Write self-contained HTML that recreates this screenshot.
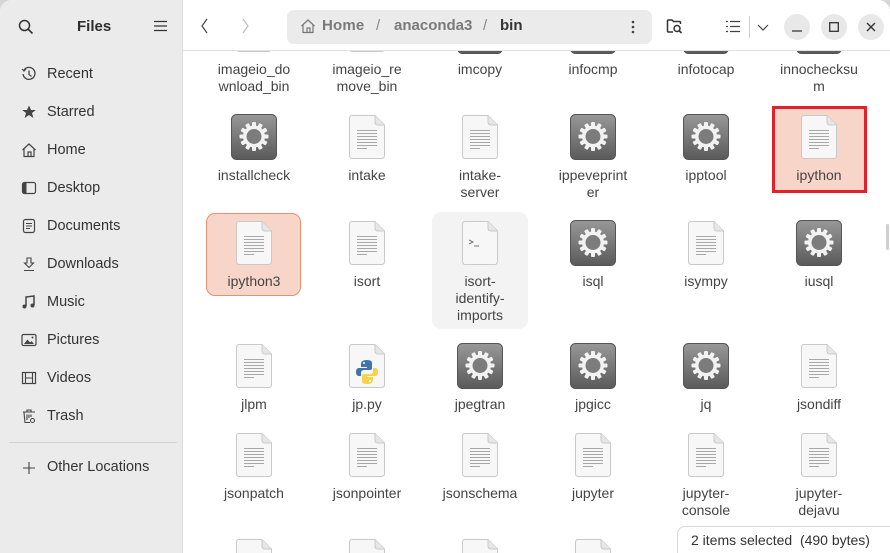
<!DOCTYPE html>
<html><head><meta charset="utf-8">
<style>
*{box-sizing:border-box;margin:0;padding:0}
body{width:890px;height:553px;overflow:hidden;background:#d6d6d6;font-family:"Liberation Sans",sans-serif;font-size:14px;color:#3d3d3d;position:relative}
#win{position:absolute;left:0;top:0;width:890px;height:553px;border-radius:12px 12px 0 0;overflow:hidden;background:#fff}
#side{position:absolute;left:0;top:0;width:183px;height:553px;background:#ebebeb;border-right:1px solid #dcdcdc}
.si{position:absolute;left:47px;font-size:14.5px;color:#333}
.ic{position:absolute;left:21px}
#main{position:absolute;left:183px;top:0;width:707px;height:553px;background:#fff;overflow:hidden}
#hdr{position:absolute;left:183px;top:0;width:707px;height:51px;background:#fff;border-bottom:1px solid #e2e2e2;z-index:5}
.it{position:absolute;width:96px;text-align:center}
.it svg{display:block;margin:0 auto}
.lb{font-size:14px;line-height:17px;color:#444;margin-top:8px}
.wb{position:absolute;top:14px;width:26px;height:26px;border-radius:13px;background:#e8e8e8}
</style></head><body>
<svg width="0" height="0" style="position:absolute">
<defs>
<linearGradient id="gg" x1="0" y1="0" x2="0" y2="1"><stop offset="0" stop-color="#989898"/><stop offset="1" stop-color="#5a5a5a"/></linearGradient>
<symbol id="file" viewBox="0 0 38 46">
<path d="M4 1.5H27L36.5 11V41.5Q36.5 44.5 33.5 44.5H4.5Q1.5 44.5 1.5 41.5V4.5Q1.5 1.5 4 1.5Z" fill="#f7f7f7" stroke="#c9c9c9"/>
<path d="M27 1.5V8Q27 11 30 11H36.5" fill="#e6e6e6" stroke="#c9c9c9"/>
<g stroke="#a8a8a8" stroke-width="1"><path d="M9 16.5H29M9 19.5H29M9 22.5H29M9 25.5H29M9 28.5H29M9 31.5H29M9 34.5H19"/></g>
</symbol>
<symbol id="term" viewBox="0 0 38 46">
<path d="M4 1.5H27L36.5 11V41.5Q36.5 44.5 33.5 44.5H4.5Q1.5 44.5 1.5 41.5V4.5Q1.5 1.5 4 1.5Z" fill="#f7f7f7" stroke="#c9c9c9"/>
<path d="M27 1.5V8Q27 11 30 11H36.5" fill="#e6e6e6" stroke="#c9c9c9"/>
<path d="M8 20L12 22L8 24M13 26H18" stroke="#777" fill="none" stroke-width="1"/>
</symbol>
<symbol id="py" viewBox="0 0 38 46">
<path d="M4 1.5H27L36.5 11V41.5Q36.5 44.5 33.5 44.5H4.5Q1.5 44.5 1.5 41.5V4.5Q1.5 1.5 4 1.5Z" fill="#f7f7f7" stroke="#c9c9c9"/>
<path d="M27 1.5V8Q27 11 30 11H36.5" fill="#e6e6e6" stroke="#c9c9c9"/>
<path d="M19 17Q13 17 13 21V24H19V25H11Q8 25 8 29Q8 33 11 33H13V30Q13 27 16 27H22Q24 27 24 25V20Q24 17 19 17Z" fill="#3d74ad"/>
<path d="M19 41Q25 41 25 37V34H19V33H27Q30 33 30 29Q30 25 27 25H25V28Q25 31 22 31H16Q14 31 14 33V38Q14 41 19 41Z" fill="#f5d24b"/>
<circle cx="16" cy="20" r="1" fill="#fff"/><circle cx="22" cy="38" r="1" fill="#fff"/>
</symbol>
<symbol id="gear" viewBox="0 0 46 46">
<rect x="0.5" y="0.5" width="45" height="45" rx="5" fill="url(#gg)" stroke="#555"/>
<g transform="translate(23 22.5)" fill="#f2f2f2">
<circle r="11"/>
<g><rect x="-2" y="-14.5" width="4" height="29" rx="1"/><rect x="-2" y="-14.5" width="4" height="29" rx="1" transform="rotate(30)"/><rect x="-2" y="-14.5" width="4" height="29" rx="1" transform="rotate(60)"/><rect x="-2" y="-14.5" width="4" height="29" rx="1" transform="rotate(90)"/><rect x="-2" y="-14.5" width="4" height="29" rx="1" transform="rotate(120)"/><rect x="-2" y="-14.5" width="4" height="29" rx="1" transform="rotate(150)"/></g>
<circle r="7.5" fill="#7c7c7c"/>
</g>
</symbol>
</defs></svg>
<div id="win">
<div id="side">
<svg style="position:absolute;left:18px;top:19px" width="16" height="16" viewBox="0 0 16 16"><circle cx="6.5" cy="6.5" r="5" fill="none" stroke="#333" stroke-width="1.5"/><path d="M10 10L14.5 14.5" stroke="#333" stroke-width="1.6"/></svg>
<div style="position:absolute;left:77px;top:18px;font-weight:bold;font-size:15px;color:#2e2e2e">Files</div>
<svg style="position:absolute;left:154px;top:20px" width="13" height="12"><path d="M0 1.5H13M0 6H13M0 10.5H13" stroke="#333" stroke-width="1.2"/></svg>
<svg class="ic" style="top:66px" width="16" height="16" viewBox="0 0 16 16"><path d="M3 4A6 6 0 1 1 2 8" fill="none" stroke="#444" stroke-width="1.3"/><path d="M8 4.5V8.5L10.5 10.5" fill="none" stroke="#444" stroke-width="1.3"/><path d="M1 3L3 5L5 3" fill="none" stroke="#444" stroke-width="1.2"/></svg>
<div class="si" style="top:66px">Recent</div>
<svg class="ic" style="top:104px" width="16" height="16" viewBox="0 0 16 16"><path d="M8 1.5L10 6H14.8L11 9L12.4 14L8 11L3.6 14L5 9L1.2 6H6Z" fill="#444"/></svg>
<div class="si" style="top:104px">Starred</div>
<svg class="ic" style="top:142px" width="16" height="16" viewBox="0 0 16 16"><path d="M1.5 8L8 2L14.5 8M3 7V14.5H13V7M7 14.5V10H10V14.5" fill="none" stroke="#444" stroke-width="1.2"/></svg>
<div class="si" style="top:142px">Home</div>
<svg class="ic" style="top:180px" width="16" height="16" viewBox="0 0 16 16"><rect x="1.5" y="2.5" width="13" height="11" rx="2" fill="none" stroke="#444" stroke-width="1.2"/><rect x="2" y="3" width="3.5" height="10" fill="#444"/></svg>
<div class="si" style="top:180px">Desktop</div>
<svg class="ic" style="top:218px" width="16" height="16" viewBox="0 0 16 16"><rect x="2.5" y="1.5" width="11" height="13" rx="2" fill="none" stroke="#444" stroke-width="1.2"/><path d="M5 5.5H11M5 8H11M5 10.5H9" stroke="#444"/></svg>
<div class="si" style="top:218px">Documents</div>
<svg class="ic" style="top:256px" width="16" height="16" viewBox="0 0 16 16"><path d="M6 2H10V7H12.5L8 11.5L3.5 7H6Z M3 14.5H13" fill="none" stroke="#444" stroke-width="1.1"/></svg>
<div class="si" style="top:256px">Downloads</div>
<svg class="ic" style="top:294px" width="16" height="16" viewBox="0 0 16 16"><path d="M5 12V3L13 2V11" fill="none" stroke="#444" stroke-width="1.5"/><circle cx="3.5" cy="12.5" r="2" fill="#444"/><circle cx="11.5" cy="11.5" r="2" fill="#444"/></svg>
<div class="si" style="top:294px">Music</div>
<svg class="ic" style="top:332px" width="16" height="16" viewBox="0 0 16 16"><rect x="1" y="2.5" width="14" height="11" rx="1.5" fill="none" stroke="#444" stroke-width="1.2"/><path d="M3 12L6.5 7.5L9 10.5L10.5 9L13 12Z" fill="#444"/><circle cx="11.5" cy="5.5" r="1" fill="#444"/></svg>
<div class="si" style="top:332px">Pictures</div>
<svg class="ic" style="top:370px" width="16" height="16" viewBox="0 0 16 16"><rect x="1.5" y="2.5" width="13" height="11" fill="none" stroke="#444" stroke-width="1.2"/><path d="M4.5 2.5V13.5M11.5 2.5V13.5M4.5 8H11.5" stroke="#444" stroke-width="1.1"/></svg>
<div class="si" style="top:370px">Videos</div>
<svg class="ic" style="top:408px" width="16" height="16" viewBox="0 0 16 16"><path d="M2 4H14M6 4V2H10V4M3 4.5L4 14.5H9M6 6.5V12M8 6.5V10M10 6.5V9" fill="none" stroke="#444" stroke-width="1.1"/><circle cx="11.5" cy="12.5" r="2" fill="none" stroke="#444"/></svg>
<div class="si" style="top:408px">Trash</div>
<div style="position:absolute;left:9px;top:442px;width:168px;height:1px;background:#d2d2d2"></div>
<svg class="ic" style="top:460px" width="16" height="16" viewBox="0 0 16 16"><path d="M8 2V14M2 8H14" stroke="#444" stroke-width="1.1"/></svg>
<div class="si" style="top:459px">Other Locations</div>
</div>

<div id="hdr">
<svg style="position:absolute;left:17px;top:18px" width="10" height="16"><path d="M7 1L2 8L7 15" fill="none" stroke="#444" stroke-width="1.2"/></svg>
<svg style="position:absolute;left:57px;top:18px" width="10" height="16"><path d="M3 1L8 8L3 15" fill="none" stroke="#bbb" stroke-width="1.2"/></svg>
<div style="position:absolute;left:104px;top:10px;width:365px;height:34px;background:#ebebeb;border-radius:7px"></div>
<svg style="position:absolute;left:117px;top:18px" width="16" height="16" viewBox="0 0 16 16"><path d="M1.5 8L8 2L14.5 8M3 7V14.5H13V7M7 14.5V10H10V14.5" fill="none" stroke="#777" stroke-width="1.2"/></svg>
<div style="position:absolute;left:139px;top:17px;font-size:15px;color:#7a7a7a;font-weight:bold;letter-spacing:.2px">Home</div>
<div style="position:absolute;left:193px;top:17px;font-size:15px;color:#888">/</div>
<div style="position:absolute;left:211px;top:17px;font-size:15px;color:#7a7a7a;font-weight:bold">anaconda3</div>
<div style="position:absolute;left:300px;top:17px;font-size:15px;color:#888">/</div>
<div style="position:absolute;left:317px;top:17px;font-size:15px;color:#333;font-weight:bold">bin</div>
<svg style="position:absolute;left:448px;top:20px" width="4" height="14"><circle cx="2" cy="2" r="1.3" fill="#444"/><circle cx="2" cy="7" r="1.3" fill="#444"/><circle cx="2" cy="12" r="1.3" fill="#444"/></svg>
<svg style="position:absolute;left:483px;top:18px" width="18" height="16" viewBox="0 0 18 16"><path d="M7 14H2.5Q1.5 14 1.5 13V3Q1.5 2 2.5 2H6L7.5 3.5H13.5Q14.5 3.5 14.5 4.5V6" fill="none" stroke="#333" stroke-width="1.5"/><circle cx="11" cy="10.5" r="3" fill="none" stroke="#333" stroke-width="1.5"/><path d="M13 12.5L15.5 15" stroke="#333" stroke-width="1.6"/></svg>
<svg style="position:absolute;left:543px;top:20px" width="14" height="13"><path d="M0 1.5H2M0 6.5H2M0 11.5H2M4 1.5H14M4 6.5H14M4 11.5H14" stroke="#444" stroke-width="1.3"/></svg>
<div style="position:absolute;left:566px;top:16px;width:1px;height:22px;background:#ccc"></div>
<svg style="position:absolute;left:574px;top:24px" width="12" height="7"><path d="M1 1L6 6L11 1" fill="none" stroke="#444" stroke-width="1.2"/></svg>
<div class="wb" style="left:601px"></div><svg style="position:absolute;left:609px;top:30px" width="10" height="2"><path d="M0 1H10" stroke="#333" stroke-width="1.3"/></svg>
<div class="wb" style="left:638px"></div><svg style="position:absolute;left:646px;top:22px" width="10" height="10"><rect x=".7" y=".7" width="8.6" height="8.6" fill="none" stroke="#333" stroke-width="1.3"/></svg>
<div class="wb" style="left:675px"></div><svg style="position:absolute;left:683px;top:22px" width="10" height="10"><path d="M1 1L9 9M9 1L1 9" stroke="#333" stroke-width="1.4"/></svg>
</div>

<div id="main">
<div style="position:absolute;left:589px;top:106px;width:95px;height:87px;background:#f8d5c9;border:3px solid #e3212b"></div>
<div style="position:absolute;left:23px;top:213px;width:95px;height:83px;background:#f8d5c9;border:1.5px solid #e8906f;border-radius:9px"></div>
<div style="position:absolute;left:249px;top:212px;width:96px;height:117px;background:#f3f3f3;border-radius:9px"></div>

<div class="it" style="left:23px;top:7px"><svg width="38" height="46"><use href="#file"/></svg><div class="lb">imageio_do<br>wnload_bin</div></div>
<div class="it" style="left:136px;top:7px"><svg width="38" height="46"><use href="#file"/></svg><div class="lb">imageio_re<br>move_bin</div></div>
<div class="it" style="left:249px;top:8px"><svg width="46" height="46"><use href="#gear"/></svg><div class="lb" style="margin-top:7px">imcopy</div></div>
<div class="it" style="left:362px;top:8px"><svg width="46" height="46"><use href="#gear"/></svg><div class="lb" style="margin-top:7px">infocmp</div></div>
<div class="it" style="left:475px;top:8px"><svg width="46" height="46"><use href="#gear"/></svg><div class="lb" style="margin-top:7px">infotocap</div></div>
<div class="it" style="left:588px;top:8px"><svg width="46" height="46"><use href="#gear"/></svg><div class="lb" style="margin-top:7px">innochecksu<br>m</div></div>

<div class="it" style="left:23px;top:114px"><svg width="46" height="46"><use href="#gear"/></svg><div class="lb" style="margin-top:7px">installcheck</div></div>
<div class="it" style="left:136px;top:114px"><svg width="38" height="46"><use href="#file"/></svg><div class="lb" style="margin-top:7px">intake</div></div>
<div class="it" style="left:249px;top:114px"><svg width="38" height="46"><use href="#file"/></svg><div class="lb" style="margin-top:7px">intake-<br>server</div></div>
<div class="it" style="left:362px;top:114px"><svg width="46" height="46"><use href="#gear"/></svg><div class="lb" style="margin-top:7px">ippeveprint<br>er</div></div>
<div class="it" style="left:475px;top:114px"><svg width="46" height="46"><use href="#gear"/></svg><div class="lb" style="margin-top:7px">ipptool</div></div>
<div class="it" style="left:588px;top:114px"><svg width="38" height="46"><use href="#file"/></svg><div class="lb" style="margin-top:7px">ipython</div></div>

<div class="it" style="left:23px;top:220px"><svg width="38" height="46"><use href="#file"/></svg><div class="lb" style="margin-top:7px">ipython3</div></div>
<div class="it" style="left:136px;top:220px"><svg width="38" height="46"><use href="#file"/></svg><div class="lb" style="margin-top:7px">isort</div></div>
<div class="it" style="left:249px;top:220px"><svg width="38" height="46"><use href="#term"/></svg><div class="lb" style="margin-top:7px">isort-<br>identify-<br>imports</div></div>
<div class="it" style="left:362px;top:220px"><svg width="46" height="46"><use href="#gear"/></svg><div class="lb" style="margin-top:7px">isql</div></div>
<div class="it" style="left:475px;top:220px"><svg width="38" height="46"><use href="#file"/></svg><div class="lb" style="margin-top:7px">isympy</div></div>
<div class="it" style="left:588px;top:220px"><svg width="46" height="46"><use href="#gear"/></svg><div class="lb" style="margin-top:7px">iusql</div></div>

<div class="it" style="left:23px;top:343px"><svg width="38" height="46"><use href="#file"/></svg><div class="lb" style="margin-top:7px">jlpm</div></div>
<div class="it" style="left:136px;top:343px"><svg width="38" height="46"><use href="#py"/></svg><div class="lb" style="margin-top:7px">jp.py</div></div>
<div class="it" style="left:249px;top:343px"><svg width="46" height="46"><use href="#gear"/></svg><div class="lb" style="margin-top:7px">jpegtran</div></div>
<div class="it" style="left:362px;top:343px"><svg width="46" height="46"><use href="#gear"/></svg><div class="lb" style="margin-top:7px">jpgicc</div></div>
<div class="it" style="left:475px;top:343px"><svg width="46" height="46"><use href="#gear"/></svg><div class="lb" style="margin-top:7px">jq</div></div>
<div class="it" style="left:588px;top:343px"><svg width="38" height="46"><use href="#file"/></svg><div class="lb" style="margin-top:7px">jsondiff</div></div>

<div class="it" style="left:23px;top:432px"><svg width="38" height="46"><use href="#file"/></svg><div class="lb" style="margin-top:7px">jsonpatch</div></div>
<div class="it" style="left:136px;top:432px"><svg width="38" height="46"><use href="#file"/></svg><div class="lb" style="margin-top:7px">jsonpointer</div></div>
<div class="it" style="left:249px;top:432px"><svg width="38" height="46"><use href="#file"/></svg><div class="lb" style="margin-top:7px">jsonschema</div></div>
<div class="it" style="left:362px;top:432px"><svg width="38" height="46"><use href="#file"/></svg><div class="lb" style="margin-top:7px">jupyter</div></div>
<div class="it" style="left:475px;top:432px"><svg width="38" height="46"><use href="#file"/></svg><div class="lb" style="margin-top:7px">jupyter-<br>console</div></div>
<div class="it" style="left:588px;top:432px"><svg width="38" height="46"><use href="#file"/></svg><div class="lb" style="margin-top:7px">jupyter-<br>dejavu</div></div>

<div class="it" style="left:23px;top:538px;height:15px;overflow:hidden"><svg width="38" height="46"><use href="#file"/></svg></div>
<div class="it" style="left:136px;top:538px;height:15px;overflow:hidden"><svg width="38" height="46"><use href="#file"/></svg></div>
<div class="it" style="left:249px;top:538px;height:15px;overflow:hidden"><svg width="38" height="46"><use href="#file"/></svg></div>
<div class="it" style="left:362px;top:538px;height:15px;overflow:hidden"><svg width="38" height="46"><use href="#file"/></svg></div>

<div style="position:absolute;left:703px;top:224px;width:3px;height:26px;background:#cfcfcf;border-radius:2px"></div>
<div style="position:absolute;left:494px;top:526px;width:213px;height:27px;background:#fff;border:1px solid #d8d8d8;border-bottom:none;border-right:none;border-radius:8px 0 0 0;font-size:14px;color:#333;padding:5px 0 0 13px;white-space:nowrap;overflow:hidden">2 items selected&nbsp; (490 bytes)</div>
</div>
</div>
</body></html>
